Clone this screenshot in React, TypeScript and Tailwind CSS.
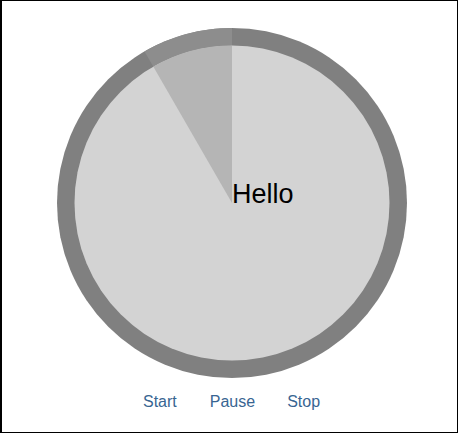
import React from "react";

export default function App() {
  const cx = 176;
  const cy = 176;
  const R = 175;
  const r = 157.5;
  const a = (30 * Math.PI) / 180;
  const ox = cx - R * Math.sin(a);
  const oy = cy - R * Math.cos(a);
  const ix = cx - r * Math.sin(a);
  const iy = cy - r * Math.cos(a);
  const ringWedge = `M ${cx} ${cy - R} A ${R} ${R} 0 0 0 ${ox} ${oy} L ${ix} ${iy} A ${r} ${r} 0 0 1 ${cx} ${cy - r} Z`;
  const innerWedge = `M ${cx} ${cy} L ${cx} ${cy - r} A ${r} ${r} 0 0 0 ${ix} ${iy} Z`;

  return (
    <div className="w-[458px] h-[433px] bg-white border-black border-t border-r border-b border-l-2 flex flex-col font-['Liberation_Sans',Arial,sans-serif]">
      <svg width="352" height="352" viewBox="0 0 352 352" className="ml-[54px] mt-[26px] shrink-0">
        <circle cx={cx} cy={cy} r={R} fill="#808080" />
        <circle cx={cx} cy={cy} r={r} fill="#d3d3d3" />
        <path d={ringWedge} fill="#8d8d8d" />
        <path d={innerWedge} fill="#b5b5b5" />
        <text x={cx} y={cy} fontSize="27" fill="#000" fontFamily="'Liberation Sans', Arial, sans-serif">
          Hello
        </text>
      </svg>
      <div className="flex pl-[141px] mt-[14px] text-[16px] leading-[18px] text-[#386592]">
        <span>Start</span>
        <span className="ml-[33px]">Pause</span>
        <span className="ml-[32px]">Stop</span>
      </div>
    </div>
  );
}
